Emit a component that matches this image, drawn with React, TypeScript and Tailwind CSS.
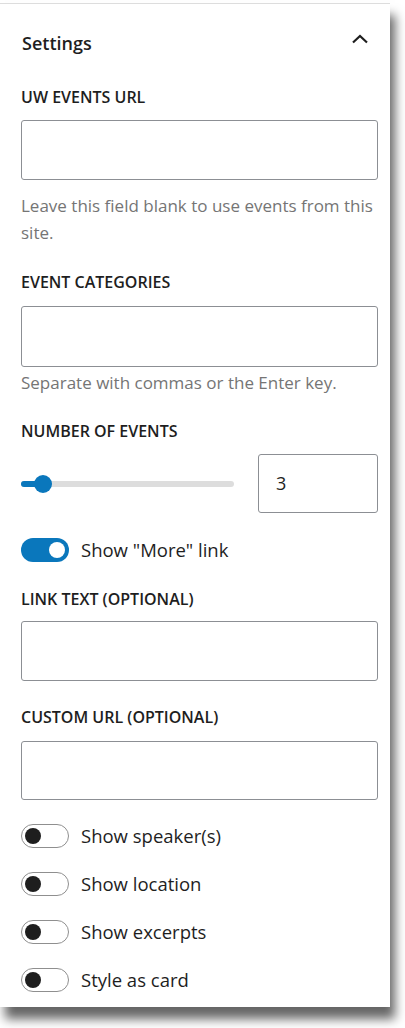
import React from 'react';

const FONT = { fontFamily: '"Open Sans", "Noto Sans", Arial, sans-serif' };

const FieldLabel: React.FC<{ text: string; className?: string }> = ({ text, className = '' }) => (
  <div className={`h-[20px] leading-[20px] text-[16px] font-semibold uppercase text-[#1e1e1e] ${className}`}>{text}</div>
);

const TextBox: React.FC<{ className?: string }> = ({ className = '' }) => (
  <div className={`w-full rounded-[3px] border border-[#8c8f94] bg-white ${className}`} />
);

const Toggle: React.FC<{ on?: boolean; label: string; className?: string }> = ({ on = false, label, className = '' }) => (
  <div className={`flex h-[24px] items-center gap-[12px] ${className}`}>
    {on ? (
      <div className="flex h-[24px] w-[48px] items-center justify-end rounded-full bg-[#0a77bc] pr-[4px]">
        <div className="h-[16px] w-[16px] rounded-full bg-white" />
      </div>
    ) : (
      <div className="flex h-[24px] w-[48px] items-center rounded-full border border-[#8f8f8f] bg-white pl-[3px]">
        <div className="h-[16px] w-[16px] rounded-full bg-[#1e1e1e]" />
      </div>
    )}
    <span className="text-[18.5px] leading-[24px] text-[#1e1e1e]">{label}</span>
  </div>
);

export default function App() {
  return (
    <div className="min-h-screen bg-white" style={FONT}>
      <div className="mt-[3px] w-[390px] border-t border-[#dddddd] bg-white pb-[15px] pl-[21px] pr-[12px] pt-[27px] shadow-[5px_12px_10px_rgba(0,0,0,0.6)]">
        {/* header */}
        <div className="flex h-[24px] items-center justify-between pl-[1px]">
          <h2 className="text-[18px] font-semibold leading-[24px] text-[#1e1e1e]">Settings</h2>
          <svg width="20" height="20" viewBox="0 0 20 20" className="mr-[8px]">
            <path d="M3 9.5 L10 3 L17 9.5" fill="none" stroke="#1e1e1e" strokeWidth="2.2" />
          </svg>
        </div>

        <FieldLabel text="UW Events URL" className="mt-[32px]" />
        <TextBox className="mt-[13px] h-[60px]" />
        <p className="mt-[12px] text-[17px] leading-[27px] text-[#757575]">
          Leave this field blank to use events from this site.
        </p>

        <FieldLabel text="Event Categories" className="mt-[26px]" />
        <TextBox className="mt-[14px] h-[61px]" />
        <p className="mt-[2px] text-[17px] leading-[27px] text-[#757575]">Separate with commas or the Enter key.</p>

        <FieldLabel text="Number of Events" className="mt-[25px]" />
        <div className="mt-[13px] flex h-[59px] items-center gap-[24px]">
          <div className="relative h-[6px] w-[213px] rounded-full bg-[#dddddd]">
            <div className="h-[6px] w-[24px] rounded-full bg-[#0a77bc]" />
            <div className="absolute left-[13px] top-[-6px] h-[18px] w-[18px] rounded-full bg-[#0a77bc]" />
          </div>
          <div className="flex h-[59px] w-[120px] items-center rounded-[3px] border border-[#8c8f94] pl-[17px] text-[18px] text-[#1e1e1e]">
            3
          </div>
        </div>

        <Toggle on label={'Show "More" link'} className="mt-[25px]" />

        <FieldLabel text="Link Text (optional)" className="mt-[27px]" />
        <TextBox className="mt-[12px] h-[60px]" />

        <FieldLabel text="Custom URL (optional)" className="mt-[26px]" />
        <TextBox className="mt-[14px] h-[59px]" />

        <div className="mt-[24px] flex flex-col gap-[24px]">
          <Toggle label="Show speaker(s)" />
          <Toggle label="Show location" />
          <Toggle label="Show excerpts" />
          <Toggle label="Style as card" />
        </div>
      </div>
    </div>
  );
}
